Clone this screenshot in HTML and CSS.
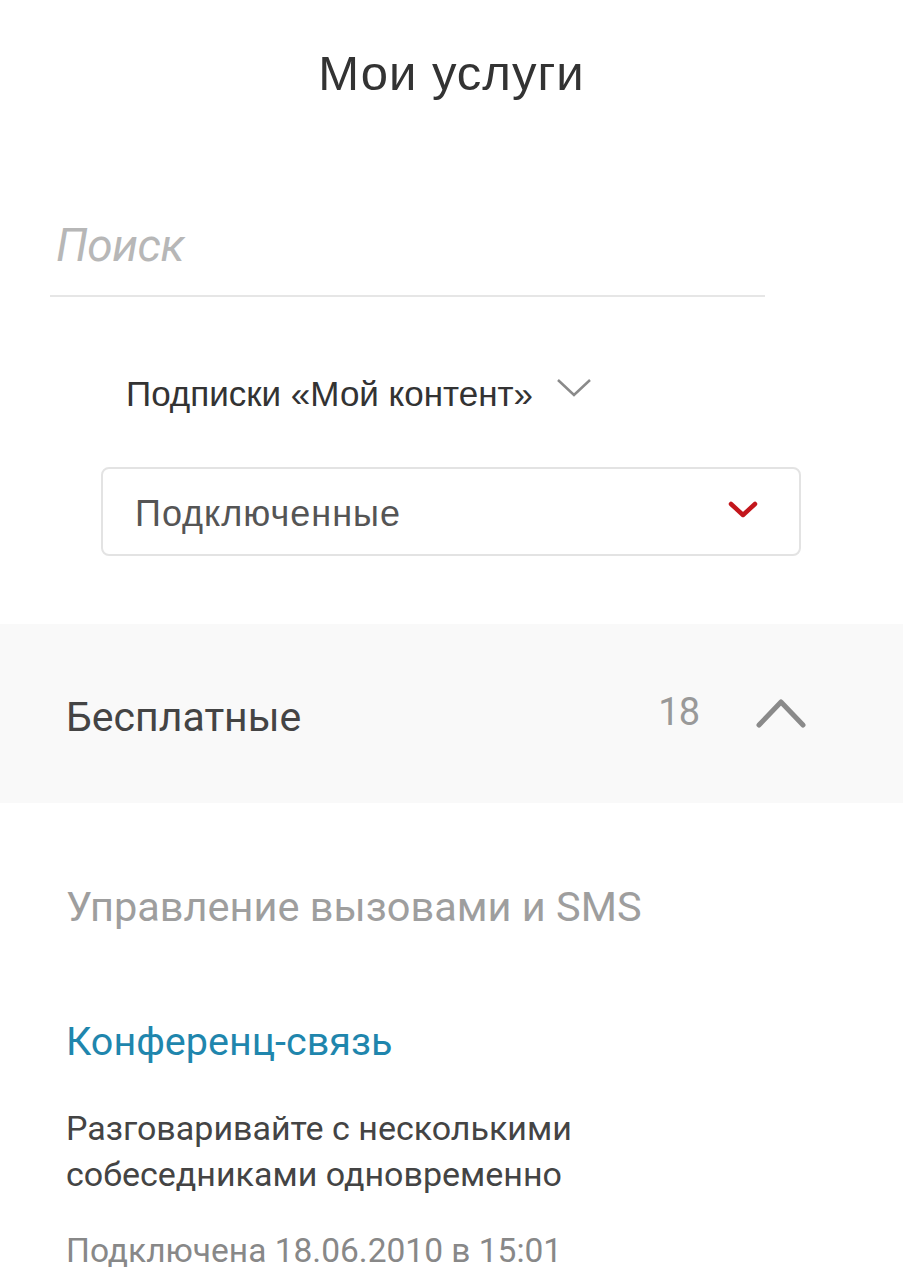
FILE: index.html
```html
<!DOCTYPE html>
<html lang="ru">
<head>
<meta charset="utf-8">
<link rel="stylesheet" href="styles.css">
</head>
<body>
<div class="page">
  <h1 class="title">Мои услуги</h1>
  <div class="search">
    <span class="search-placeholder">Поиск</span>
  </div>
  <div class="subs">
    <span class="subs-label">Подписки «Мой контент»</span>
    <svg class="subs-chevron" width="36" height="22" viewBox="0 0 36 22"><path d="M2 3 L18 18 L34 3" fill="none" stroke="#8a8a8a" stroke-width="2.5"/></svg>
  </div>
  <div class="select">
    <span class="select-text">Подключенные</span>
    <svg class="select-chevron" width="32" height="22" viewBox="0 0 32 22"><path d="M4 5 L16 16 L28 5" fill="none" stroke="#c3161c" stroke-width="4.5" stroke-linecap="round" stroke-linejoin="round"/></svg>
  </div>
  <div class="group">
    <span class="group-name">Бесплатные</span>
    <span class="group-count">18</span>
    <svg class="group-chevron" width="52" height="32" viewBox="0 0 52 32"><path d="M4 28 L26 5 L48 28" fill="none" stroke="#8a8a8a" stroke-width="5" stroke-linecap="round" stroke-linejoin="round"/></svg>
  </div>
  <div class="category">Управление вызовами и SMS</div>
  <div class="service">
    <div class="service-name">Конференц-связь</div>
    <div class="service-desc">Разговаривайте с несколькими<br>собеседниками одновременно</div>
    <div class="service-date">Подключена 18.06.2010 в 15:01</div>
  </div>
</div>
</body>
</html>
```

FILE: styles.css
```css
html, body {
  margin: 0;
  padding: 0;
  background: #fff;
}
.page {
  width: 903px;
  font-family: Roboto, "Liberation Sans", sans-serif;
  overflow: hidden;
}
.title {
  margin: 0;
  padding-top: 42px;
  height: 62px;
  line-height: 62px;
  text-align: center;
  font-family: "Liberation Sans", Arial, sans-serif;
  font-weight: normal;
  font-size: 49px;
  letter-spacing: 1px;
  color: #333;
}
.search {
  margin: 113px 138px 0 50px;
  border-bottom: 2px solid #e6e6e6;
  height: 80px;
  box-sizing: border-box;
  padding-left: 6px;
}
.search-placeholder {
  display: block;
  font-family: Roboto, sans-serif;
  font-style: italic;
  font-size: 46px;
  line-height: 56px;
  color: #b7b7b7;
  letter-spacing: -0.5px;
}
.subs {
  display: flex;
  align-items: center;
  margin: 72px 0 0 126px;
  height: 50px;
}
.subs-label {
  font-family: "Liberation Sans", Arial, sans-serif;
  font-size: 35px;
  color: #333;
}
.subs-chevron {
  margin-left: 23px;
  margin-top: -12px;
}
.select {
  display: flex;
  align-items: center;
  justify-content: space-between;
  margin: 48px 102px 0 101px;
  height: 89px;
  box-sizing: border-box;
  border: 2px solid #e3e3e3;
  border-radius: 8px;
  padding: 0 40px 0 32px;
}
.select-text {
  font-family: "Liberation Sans", Arial, sans-serif;
  font-size: 36px;
  letter-spacing: 1px;
  color: #555;
  padding-top: 4px;
}
.select-chevron {
  margin-top: -4px;
}
.group {
  display: flex;
  align-items: center;
  margin-top: 68px;
  height: 179px;
  background: #f9f9f9;
  padding: 0 96px 0 66px;
}
.group-name {
  flex: 1;
  font-size: 41px;
  color: #444;
  padding-top: 6px;
}
.group-count {
  font-size: 38px;
  color: #999;
  margin-right: 56px;
  margin-top: -4px;
  letter-spacing: -1px;
}
.group-chevron {
  margin-top: -2px;
}
.category {
  padding: 79px 0 0 66px;
  font-size: 41.5px;
  line-height: 50px;
  color: #9e9e9e;
}
.service {
  padding: 85px 0 0 66px;
}
.service-name {
  font-size: 39.5px;
  line-height: 50px;
  color: #1f86ad;
}
.service-desc {
  margin-top: 38px;
  font-size: 34px;
  line-height: 46px;
  color: #444;
}
.service-date {
  margin-top: 31px;
  font-size: 33.5px;
  line-height: 46px;
  color: #888;
}
```
